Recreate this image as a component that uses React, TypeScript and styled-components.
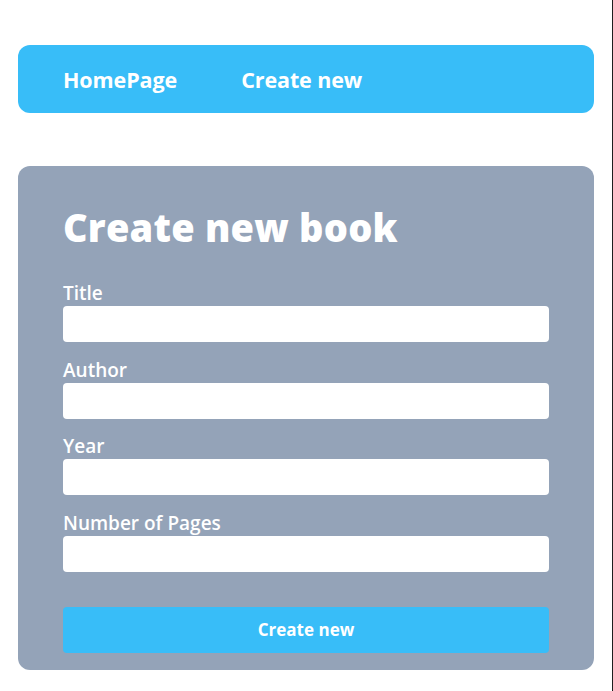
import React from "react";
import styled, { createGlobalStyle } from "styled-components";

const GlobalStyle = createGlobalStyle`
  html, body { margin: 0; padding: 0; background: #ffffff; }
  body { font-family: "Open Sans", "Noto Sans", sans-serif; }
  * { box-sizing: border-box; }
`;

const Page = styled.div`
  min-height: 100vh;
  border-right: 1px solid #1f1f1f;
  padding: 45px 18px 20px 18px;
  display: flex;
  flex-direction: column;
  gap: 53px;
`;

const Nav = styled.nav`
  height: 68px;
  background: #38bdf8;
  border-radius: 12px;
  display: flex;
  align-items: center;
  gap: 64px;
  padding: 0 45px;
`;

const NavLink = styled.a`
  color: #ffffff;
  font-weight: 700;
  font-size: 21.5px;
  text-decoration: none;
  letter-spacing: -0.1px;
`;

const Card = styled.section`
  background: #94a3b8;
  border-radius: 12px;
  padding: 38px 45px 17px;
  display: flex;
  flex-direction: column;
`;

const Heading = styled.h1`
  margin: 0 0 31px;
  color: #ffffff;
  font-size: 38px;
  font-weight: 800;
  line-height: 46px;
  letter-spacing: 0.2px;
`;

const Form = styled.form`
  display: flex;
  flex-direction: column;
`;

const Field = styled.label`
  display: flex;
  flex-direction: column;
  margin-bottom: 15.67px;
`;

const LabelText = styled.span`
  color: #ffffff;
  font-size: 19px;
  font-weight: 600;
  line-height: 25px;
`;

const Input = styled.input`
  height: 36px;
  border: none;
  border-radius: 4px;
  background: #ffffff;
  outline: none;
  padding: 0 10px;
  font-size: 16px;
`;

const Submit = styled.button`
  margin-top: 19.3px;
  height: 46px;
  border: none;
  border-radius: 4px;
  background: #38bdf8;
  color: #ffffff;
  font-family: inherit;
  font-size: 17px;
  font-weight: 700;
  cursor: pointer;
`;

const fields = ["Title", "Author", "Year", "Number of Pages"];

export default function App() {
  return (
    <>
      <GlobalStyle />
      <Page>
        <Nav>
          <NavLink href="#">HomePage</NavLink>
          <NavLink href="#">Create new</NavLink>
        </Nav>
        <Card>
          <Heading>Create new book</Heading>
          <Form onSubmit={(e) => e.preventDefault()}>
            {fields.map((f) => (
              <Field key={f}>
                <LabelText>{f}</LabelText>
                <Input type="text" />
              </Field>
            ))}
            <Submit type="submit">Create new</Submit>
          </Form>
        </Card>
      </Page>
    </>
  );
}
